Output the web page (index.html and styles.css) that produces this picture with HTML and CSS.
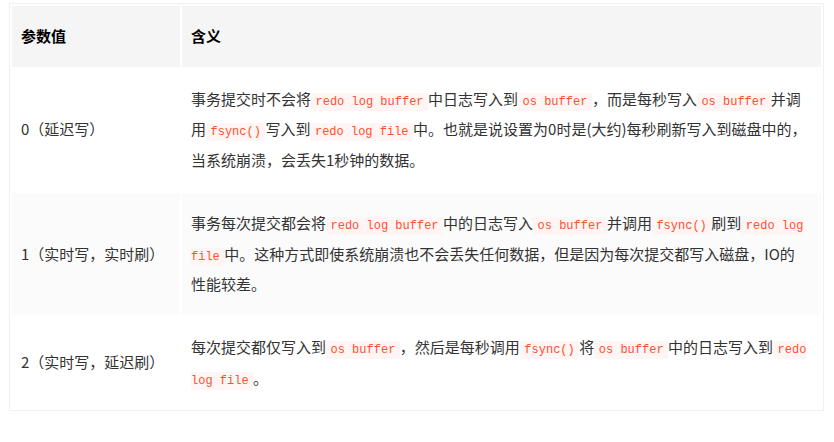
FILE: index.html
```html
<!DOCTYPE html>
<html lang="zh-CN">
<head>
<meta charset="utf-8">
<title>innodb_flush_log_at_trx_commit</title>
<link rel="stylesheet" href="styles.css">
</head>
<body>
<table class="param-table">
  <thead>
    <tr>
      <th class="col-key">参数值</th>
      <th class="col-desc">含义</th>
    </tr>
  </thead>
  <tbody>
    <tr>
      <td class="col-key">0（延迟写）</td>
      <td class="col-desc">事务提交时不会将<code>redo log buffer</code>中日志写入到<code>os buffer</code>，而是每秒写入<code>os buffer</code>并调用<code>fsync()</code>写入到<code>redo log file</code>中。也就是说设置为0时是(大约)每秒刷新写入到磁盘中的，当系统崩溃，会丢失1秒钟的数据。</td>
    </tr>
    <tr class="alt">
      <td class="col-key">1（实时写，实时刷）</td>
      <td class="col-desc">事务每次提交都会将<code>redo log buffer</code>中的日志写入<code>os buffer</code>并调用<code>fsync()</code>刷到<code>redo log file</code>中。这种方式即使系统崩溃也不会丢失任何数据，但是因为每次提交都写入磁盘，IO的性能较差。</td>
    </tr>
    <tr>
      <td class="col-key">2（实时写，延迟刷）</td>
      <td class="col-desc">每次提交都仅写入到<code>os buffer</code>，然后是每秒调用<code>fsync()</code>将<code>os buffer</code>中的日志写入到<code>redo log file</code>。</td>
    </tr>
  </tbody>
</table>
</body>
</html>
```
FILE: styles.css
```css
html, body {
  background: #ffffff;
}
body {
  margin: 0;
  padding: 3px 10px 0 9px;
  font-family: "Noto Sans CJK SC", "Noto Sans", sans-serif;
  font-size: 15px;
  color: #333333;
}
.param-table {
  width: 815px;
  border: 1px solid #f0f0f0;
  border-spacing: 2px;
  table-layout: fixed;
}
.param-table th,
.param-table td {
  padding: 15px 13px 15px 9px;
  line-height: 30.7px;
  text-align: left;
  vertical-align: middle;
}
.param-table th {
  background: #f5f5f5;
  font-weight: bold;
  color: #000000;
}
.param-table th.col-key,
.param-table td.col-key {
  width: 146px;
}
.param-table tr.alt td {
  background: #fbfbfb;
}
.param-table code {
  font-family: "Liberation Mono", "DejaVu Sans Mono", monospace;
  font-size: 12px;
  line-height: 1;
  color: #ff502c;
  background: #fff5f5;
  padding: 2px 4.5px;
  margin: 0;
  border-radius: 2px;
}
```
